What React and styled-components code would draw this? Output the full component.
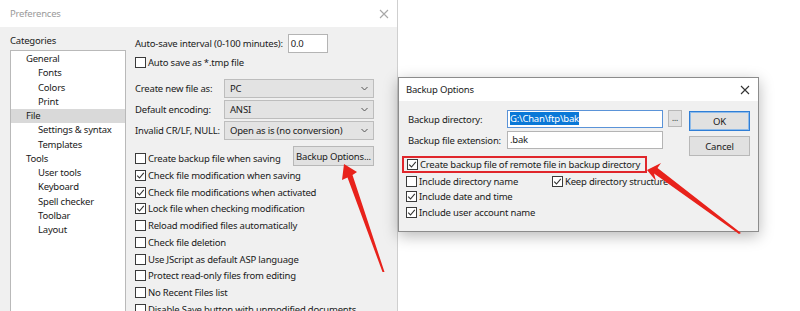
import React from "react";
import styled, { createGlobalStyle } from "styled-components";

const GlobalStyle = createGlobalStyle`
  html, body {
    margin: 0;
    padding: 0;
    background: #ffffff;
  }
  body {
    font-family: "Noto Sans", "Open Sans", sans-serif;
    font-size: 9.5px;
    letter-spacing: -0.2px;
    color: #1a1a1a;
  }
`;

const categories = [
  { label: "General", level: 0 },
  { label: "Fonts", level: 1 },
  { label: "Colors", level: 1 },
  { label: "Print", level: 1 },
  { label: "File", level: 0, selected: true },
  { label: "Settings & syntax", level: 1 },
  { label: "Templates", level: 1 },
  { label: "Tools", level: 0 },
  { label: "User tools", level: 1 },
  { label: "Keyboard", level: 1 },
  { label: "Spell checker", level: 1 },
  { label: "Toolbar", level: 1 },
  { label: "Layout", level: 1 },
];

const fileOptions = [
  { label: "Check file modification when saving", checked: true },
  { label: "Check file modifications when activated", checked: true },
  { label: "Lock file when checking modification", checked: true },
  { label: "Reload modified files automatically" },
  { label: "Check file deletion" },
  { label: "Use JScript as default ASP language" },
  { label: "Protect read-only files from editing" },
  { label: "No Recent Files list" },
  { label: "Disable Save button with unmodified documents" },
];

const Desktop = styled.div`
  position: relative;
  width: 800px;
  height: 311px;
  overflow: hidden;
  background: #ffffff;
`;

const Window = styled.div`
  position: absolute;
  left: ${(p) => p.$left}px;
  top: ${(p) => p.$top}px;
  width: ${(p) => p.$width}px;
  height: ${(p) => p.$height}px;
  display: flex;
  flex-direction: column;
  box-sizing: border-box;
  border: 1px solid ${(p) => (p.$active ? "#8c8c8c" : "#cfcfcf")};
  background: #f0f0f0;
  box-shadow: ${(p) =>
    p.$active ? "0 4px 14px rgba(0,0,0,0.28)" : "none"};
`;

const TitleBar = styled.div`
  height: ${(p) => p.$height}px;
  flex: none;
  display: flex;
  align-items: center;
  justify-content: space-between;
  padding: 0 8px 0 ${(p) => p.$pad}px;
  background: #ffffff;
  color: ${(p) => (p.$active ? "#1a1a1a" : "#9a9a9a")};
`;

const CloseX = ({ color }) => (
  <svg width="10" height="10" viewBox="0 0 10 10">
    <path d="M1 1 L9 9 M9 1 L1 9" stroke={color} strokeWidth="1.1" />
  </svg>
);

const PrefBody = styled.div`
  flex: 1;
  display: flex;
  gap: 9px;
  padding: 6px 0 0 10px;
`;

const SideColumn = styled.div`
  width: 116px;
  display: flex;
  flex-direction: column;
`;

const GroupLabel = styled.div`
  height: 17px;
  line-height: 16px;
`;

const TreeBox = styled.div`
  flex: 1;
  background: #ffffff;
  border: 1px solid #b9b9b9;
  border-bottom: none;
  padding-top: 1px;
`;

const TreeItem = styled.div`
  height: 14.25px;
  line-height: 14.25px;
  padding-left: ${(p) => (p.$level ? 27 : 15)}px;
  background: ${(p) => (p.$selected ? "#d9d9d9" : "transparent")};
  white-space: nowrap;
`;

const MainColumn = styled.div`
  width: 239px;
  margin-top: 1px;
  display: flex;
  flex-direction: column;
`;

const Row = styled.div`
  display: flex;
  align-items: ${(p) => p.$align || "center"};
  gap: ${(p) => p.$gap || 0}px;
  height: ${(p) => p.$height}px;
  margin-top: ${(p) => p.$mt || 0}px;
  justify-content: ${(p) => p.$justify || "flex-start"};
`;

const TextInput = styled.div`
  box-sizing: border-box;
  width: ${(p) => p.$width}px;
  height: ${(p) => p.$height || 19}px;
  line-height: ${(p) => (p.$height || 19) - 2}px;
  background: #ffffff;
  border: 1px solid ${(p) => (p.$focused ? "#5a93d8" : "#b4b4b4")};
  padding-left: 2px;
  white-space: nowrap;
  overflow: hidden;
`;

const Highlight = styled.span`
  background: #0a78d7;
  color: #ffffff;
`;

const FieldLabel = styled.div`
  width: ${(p) => p.$width}px;
  flex: none;
  white-space: nowrap;
`;

const SelectBox = styled.div`
  box-sizing: border-box;
  width: 150px;
  height: 19px;
  display: flex;
  align-items: center;
  justify-content: space-between;
  padding: 0 5px 0 5px;
  background: #e3e3e3;
  border: 1px solid #bdbdbd;
  white-space: nowrap;
`;

const Chevron = () => (
  <svg width="7" height="5" viewBox="0 0 7 5">
    <path d="M0.5 1 L3.5 4 L6.5 1" fill="none" stroke="#555" strokeWidth="1" />
  </svg>
);

const Button = styled.div`
  box-sizing: border-box;
  width: ${(p) => p.$width}px;
  height: ${(p) => p.$height}px;
  display: flex;
  align-items: center;
  justify-content: center;
  background: #e1e1e1;
  border: 1px solid ${(p) => (p.$default ? "#2f7ed6" : "#b8b8b8")};
  box-shadow: ${(p) => (p.$default ? "inset 0 0 0 1px #8fbbe9" : "none")};
  white-space: nowrap;
`;

const RaisedButton = styled(Button)`
  align-self: flex-start;
`;

const CheckRow = styled.label`
  display: flex;
  align-items: center;
  height: ${(p) => p.$height}px;
  white-space: nowrap;
`;

const Box = styled.span`
  box-sizing: border-box;
  width: 11px;
  height: 11px;
  flex: none;
  margin-right: 2px;
  border: 1px solid #3a3a3a;
  background: #ffffff;
  display: flex;
  align-items: center;
  justify-content: center;
`;

const Check = ({ label, checked, height }) => (
  <CheckRow $height={height}>
    <Box>
      {checked && (
        <svg width="9" height="9" viewBox="0 0 9 9">
          <path
            d="M1.2 4.6 L3.5 7 L7.8 1.8"
            fill="none"
            stroke="#333"
            strokeWidth="1.1"
          />
        </svg>
      )}
    </Box>
    {label}
  </CheckRow>
);

const DialogBody = styled.div`
  flex: 1;
  display: flex;
  flex-direction: column;
  padding: 9px 0 0 7px;
`;

const DialogTop = styled.div`
  display: flex;
  padding-left: 2px;
`;

const FieldGrid = styled.div`
  display: grid;
  grid-template-columns: 99px 156px 14px;
  grid-auto-rows: 18px;
  row-gap: 3px;
  align-items: center;
`;

const DotsButton = styled(Button)`
  margin-left: 5px;
  align-self: start;
  font-size: 8px;
  padding-bottom: 3px;
`;

const ButtonColumn = styled.div`
  display: flex;
  flex-direction: column;
  gap: 5px;
  margin-left: 12px;
  padding-top: 1px;
`;

const Outlined = styled.div`
  box-sizing: border-box;
  width: 245px;
  height: 17px;
  margin-left: -4px;
  padding-left: 3px;
  border: 2px solid #e0262b;
  display: flex;
  align-items: center;
`;

const TwoCol = styled.div`
  display: grid;
  grid-template-columns: 146px 1fr;
`;

const Overlay = styled.svg`
  position: absolute;
  left: 0;
  top: 0;
  pointer-events: none;
`;

export default function App() {
  return (
    <>
      <GlobalStyle />
      <Desktop>
        <Window $left={-1} $top={-1} $width={399} $height={330}>
          <TitleBar $height={27} $pad={10}>
            Preferences
            <CloseX color="#a8a8a8" />
          </TitleBar>
          <PrefBody>
            <SideColumn>
              <GroupLabel>Categories</GroupLabel>
              <TreeBox>
                {categories.map((c) => (
                  <TreeItem
                    key={c.label}
                    $level={c.level}
                    $selected={c.selected}
                  >
                    {c.label}
                  </TreeItem>
                ))}
              </TreeBox>
            </SideColumn>
            <MainColumn>
              <Row $height={19} $gap={5}>
                <FieldLabel>Auto-save interval (0-100 minutes):</FieldLabel>
                <TextInput $width={40}>0.0</TextInput>
              </Row>
              <Row $height={14} $mt={2}>
                <Check label="Auto save as *.tmp file" height={14} />
              </Row>
              <Row $height={19} $mt={10}>
                <FieldLabel $width={89}>Create new file as:</FieldLabel>
                <SelectBox>
                  PC
                  <Chevron />
                </SelectBox>
              </Row>
              <Row $height={19} $mt={2}>
                <FieldLabel $width={89}>Default encoding:</FieldLabel>
                <SelectBox>
                  ANSI
                  <Chevron />
                </SelectBox>
              </Row>
              <Row $height={19} $mt={2}>
                <FieldLabel $width={89}>Invalid CR/LF, NULL:</FieldLabel>
                <SelectBox>
                  Open as is (no conversion)
                  <Chevron />
                </SelectBox>
              </Row>
              <Row
                $height={21}
                $mt={6}
                $align="flex-end"
                $justify="space-between"
              >
                <Check label="Create backup file when saving" height={16.75} />
                <RaisedButton $width={81} $height={20}>
                  Backup Options...
                </RaisedButton>
              </Row>
              {fileOptions.map((o) => (
                <Check
                  key={o.label}
                  label={o.label}
                  checked={o.checked}
                  height={16.75}
                />
              ))}
            </MainColumn>
          </PrefBody>
        </Window>

        <Window $left={398} $top={77} $width={361} $height={155} $active>
          <TitleBar $height={23} $pad={7} $active>
            Backup Options
            <CloseX color="#333" />
          </TitleBar>
          <DialogBody>
            <DialogTop>
              <FieldGrid>
                <FieldLabel>Backup directory:</FieldLabel>
                <TextInput $width={156} $height={18} $focused>
                  <Highlight>G:\Chan\ftp\bak</Highlight>
                </TextInput>
                <DotsButton $width={14} $height={17}>
                  ...
                </DotsButton>
                <FieldLabel>Backup file extension:</FieldLabel>
                <TextInput $width={156} $height={18}>
                  .bak
                </TextInput>
              </FieldGrid>
              <ButtonColumn>
                <Button $width={61} $height={20} $default>
                  OK
                </Button>
                <Button $width={61} $height={20}>
                  Cancel
                </Button>
              </ButtonColumn>
            </DialogTop>
            <Outlined>
              <Check
                label="Create backup file of remote file in backup directory"
                checked
                height={13}
              />
            </Outlined>
            <TwoCol>
              <Check label="Include directory name" height={16} />
              <Check label="Keep directory structure" checked height={16} />
            </TwoCol>
            <Check label="Include date and time" checked height={15.5} />
            <Check label="Include user account name" checked height={15.5} />
          </DialogBody>
        </Window>

        <Overlay width="800" height="311" viewBox="0 0 800 311">
          <polygon
            points="344,164 357,172 352.5,175 384.5,272 382.5,272 347.5,177.5 342,180"
            fill="#e8221b"
          />
          <polygon
            points="647,170 661,163 657.5,168 741,233 739,234 654,173.5 656,181"
            fill="#e8221b"
          />
        </Overlay>
      </Desktop>
    </>
  );
}
